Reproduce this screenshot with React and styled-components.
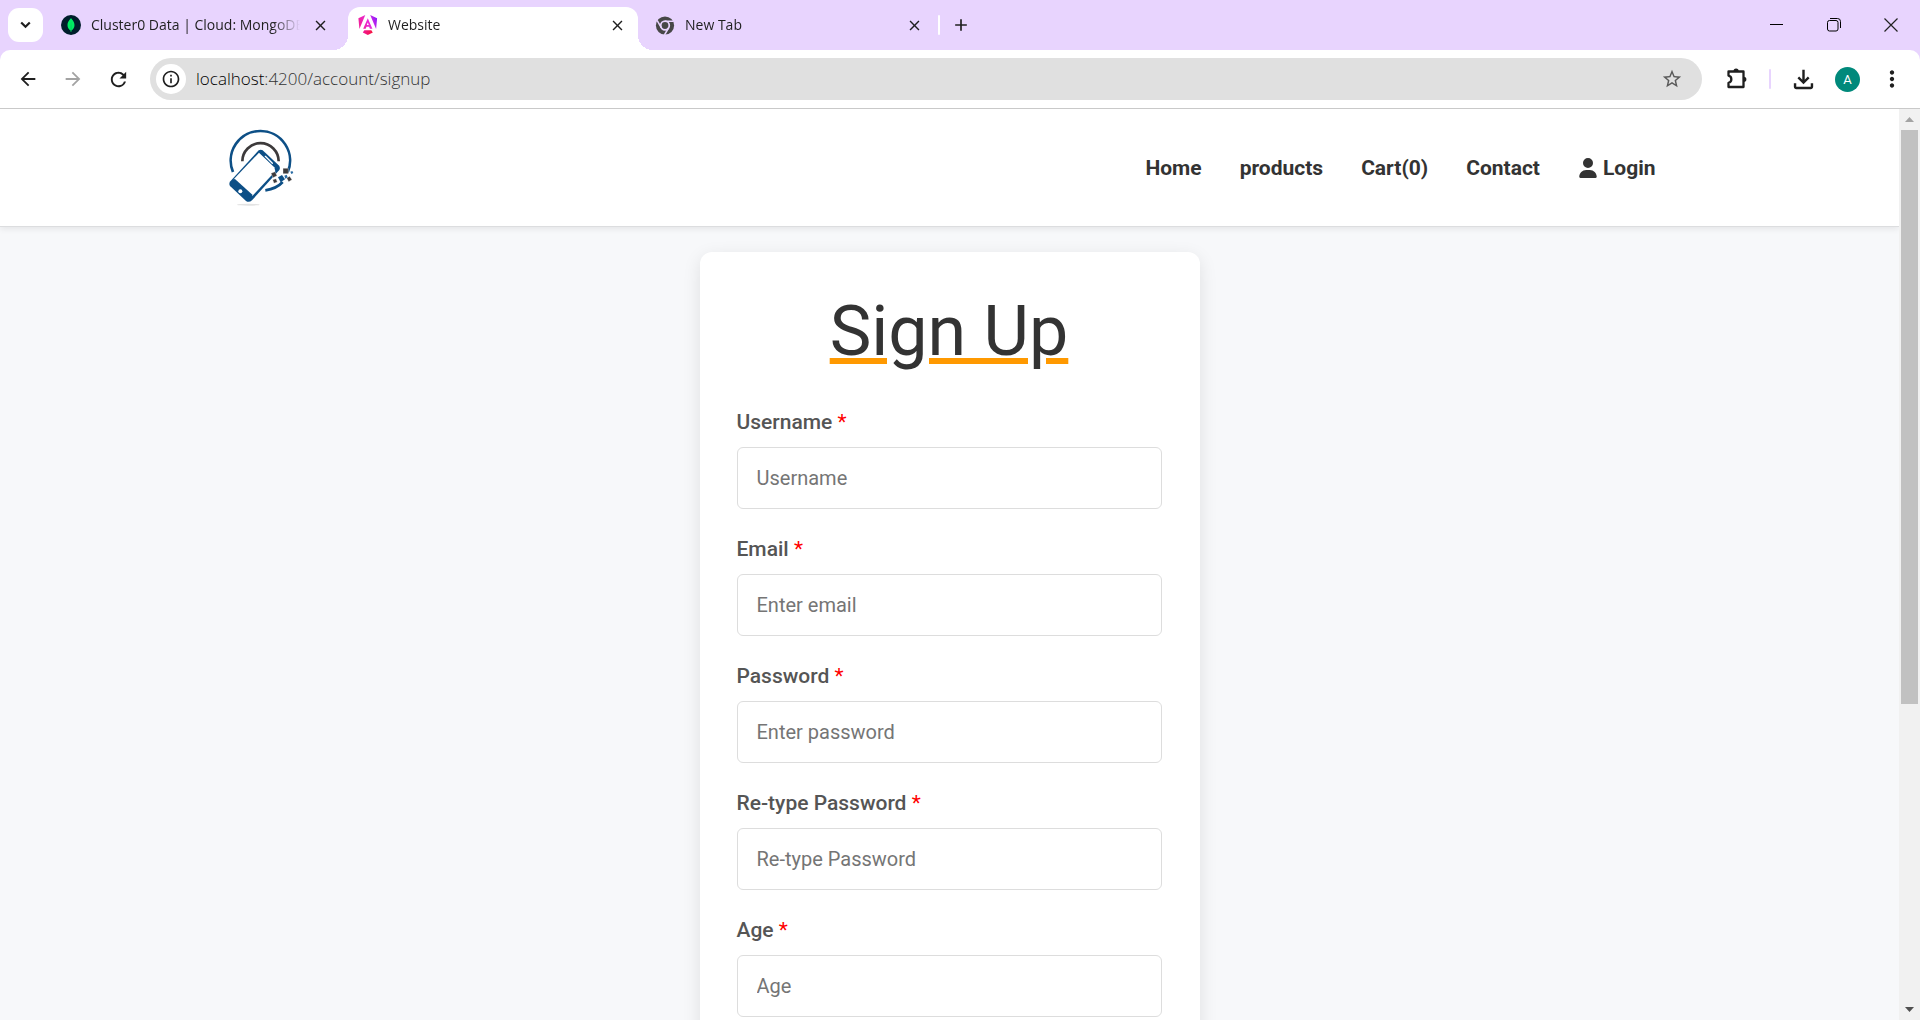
import React from "react";
import styled, { createGlobalStyle, css } from "styled-components";
import {
  MdArrowBack,
  MdArrowForward,
  MdRefresh,
  MdInfoOutline,
  MdStarBorder,
  MdOutlineFileDownload,
  MdMoreVert,
  MdClose,
  MdAdd,
} from "react-icons/md";
import { FaUser } from "react-icons/fa6";

const lavender = "#e8d4fe";
const uiFont = '"Open Sans", "Noto Sans", sans-serif';
const pageFont = 'Roboto, "Liberation Sans", sans-serif';

const GlobalStyle = createGlobalStyle`
  *, *::before, *::after { box-sizing: border-box; }
  body { margin: 0; font-family: ${pageFont}; }
  button { border: 0; padding: 0; background: none; font: inherit; color: inherit; }
  svg { display: block; flex: none; }
`;

const Window = styled.div`
  display: flex;
  flex-direction: column;
  height: 100vh;
  overflow: hidden;
  background: ${lavender};
`;

/* ---------- tab strip ---------- */

const TabStrip = styled.div`
  display: flex;
  height: 50px;
  flex: none;
  padding: 0 1px 0 8px;
  font-family: ${uiFont};
  color: #1f1f1f;
`;

const TabSearch = styled.button`
  display: flex;
  align-items: center;
  justify-content: center;
  width: 35px;
  height: 34px;
  margin: 8px 8px 0 0;
  border-radius: 11px;
  background: #fff;
`;

const Tabs = styled.div`
  display: flex;
  gap: 7px;
`;

const Tab = styled.div`
  position: relative;
  display: flex;
  align-items: center;
  gap: 10px;
  width: 290px;
  margin-top: 7px;
  padding: 0 11px 7px 10px;
  ${(p) =>
    p.$active &&
    css`
      background: #fff;
      border-radius: 12px 12px 0 0;
      &::before,
      &::after {
        content: "";
        position: absolute;
        bottom: 0;
        width: 15px;
        height: 15px;
      }
      &::before {
        right: 100%;
        background: radial-gradient(circle at 0 0, transparent 15px, #fff 15px);
      }
      &::after {
        left: 100%;
        background: radial-gradient(circle at 100% 0, transparent 15px, #fff 15px);
      }
    `}
`;

const TabTitle = styled.span`
  flex: 1;
  min-width: 0;
  overflow: hidden;
  white-space: nowrap;
  font-size: 14px;
  line-height: 22px;
  mask-image: linear-gradient(to right, #000 calc(100% - 28px), transparent);
`;

const TabClose = styled.button`
  display: flex;
  align-items: center;
  justify-content: center;
  width: 20px;
  height: 20px;
`;

const Divider = styled.span`
  width: 2px;
  height: 20px;
  flex: none;
  border-radius: 1px;
  background: ${(p) => p.$color};
`;

const NewTab = styled.div`
  display: flex;
  align-items: center;
  gap: 11px;
  padding: 0 0 0 3px;
`;

const WindowControls = styled.div`
  display: flex;
  margin-left: auto;
`;

const WindowButton = styled.button`
  display: flex;
  align-items: center;
  justify-content: center;
  width: 57px;
`;

/* ---------- toolbar ---------- */

const Toolbar = styled.div`
  display: flex;
  align-items: center;
  gap: 14px;
  height: 59px;
  flex: none;
  padding: 0 10px;
  background: #fff;
  border-bottom: 1px solid #c9c9c9;
  border-radius: 10px 10px 0 0;
  color: #1f1f1f;
  font-family: ${uiFont};
`;

const NavButtons = styled.div`
  display: flex;
  gap: 9px;
`;

const ToolButton = styled.button`
  display: flex;
  align-items: center;
  justify-content: center;
  width: 36px;
  height: 36px;

  &:disabled {
    color: #a3a3a3;
  }
`;

const Omnibox = styled.div`
  display: flex;
  align-items: center;
  flex: 1;
  height: 42px;
  margin-right: 3px;
  padding: 0 12px 0 6px;
  border-radius: 21px;
  background: #e0e0e0;
`;

const SiteInfo = styled.button`
  display: flex;
  align-items: center;
  justify-content: center;
  width: 30px;
  height: 30px;
  margin-right: 10px;
  border-radius: 50%;
  background: #fff;
`;

const Url = styled.div`
  flex: 1;
  font-size: 17px;
  font-weight: 300;
  line-height: 24px;
  color: #333;
`;

const Host = styled.span`
  color: #000;
`;

const Avatar = styled.button`
  width: 25px;
  height: 25px;
  border-radius: 50%;
  background: #00897b;
  color: #fff;
  font-family: ${pageFont};
  font-size: 13px;
  line-height: 25px;
`;

/* ---------- page ---------- */

const Viewport = styled.div`
  display: flex;
  flex: 1;
  min-height: 0;
`;

const Page = styled.div`
  flex: 1;
  overflow-y: auto;
  scrollbar-width: none;
  background: #f7f8fa;
`;

const SiteHeader = styled.header`
  position: relative;
  background: #fff;
  border-bottom: 1px solid #dcdddf;
  box-shadow: 0 2px 6px rgba(0, 0, 0, 0.08);
`;

const HeaderInner = styled.div`
  display: flex;
  align-items: center;
  justify-content: space-between;
  max-width: 1446px;
  height: 117px;
  margin: 0 auto;
`;

const SiteNav = styled.nav`
  display: flex;
  gap: 4px;
`;

const NavLink = styled.a`
  display: flex;
  align-items: center;
  gap: 5px;
  padding: 0 17px;
  font-size: 21px;
  line-height: 30px;
  font-weight: 700;
  color: #333;
  text-decoration: none;
`;

const Card = styled.form`
  width: 500px;
  max-width: 100%;
  margin: 25px auto;
  padding: 37px 38px 360px 37px;
  border-radius: 12px;
  background: #fff;
  box-shadow: 0 5px 18px rgba(0, 0, 0, 0.1);
`;

const Title = styled.h1`
  margin: 0 0 34px;
  font-size: 70px;
  line-height: 84px;
  font-weight: 400;
  text-align: center;
  color: #333;
  text-decoration: underline;
  text-decoration-color: #ff9900;
  text-decoration-thickness: 6px;
  text-underline-offset: 3px;
`;

const Field = styled.div`
  margin-bottom: 25px;
`;

const Label = styled.label`
  display: block;
  margin-bottom: 10px;
  font-size: 21px;
  line-height: 30px;
  font-weight: 500;
  color: #555;
`;

const Required = styled.span`
  font-weight: 400;
  color: #f00;
`;

const Input = styled.input`
  display: block;
  width: 100%;
  height: 62px;
  padding: 0 19px;
  border: 1px solid #ddd;
  border-radius: 6px;
  outline: none;
  font-family: ${pageFont};
  font-size: 20px;
  color: #333;

  &::placeholder {
    color: #757575;
    opacity: 1;
  }
`;

/* ---------- scrollbar ---------- */

const Scrollbar = styled.div`
  display: flex;
  flex-direction: column;
  align-items: center;
  width: 21px;
  background: #f1f1f1;
`;

const ScrollArrow = styled.button`
  display: flex;
  align-items: center;
  justify-content: center;
  width: 21px;
  height: 21px;
  color: ${(p) => (p.$dim ? "#a3a3a3" : "#505050")};
`;

const ScrollTrack = styled.div`
  flex: 1;
`;

const ScrollThumb = styled.div`
  width: 17px;
  height: 66%;
  background: #c1c1c1;
`;

/* ---------- drawings ---------- */

const ChevronIcon = () => (
  <svg width="11" height="8" viewBox="0 0 11 8">
    <path d="M1.200 1.500L5.500 5.800 9.800 1.500" fill="none" stroke="currentColor" strokeWidth="2.200" />
  </svg>
);

const MongoIcon = () => (
  <svg width="20" height="20" viewBox="0 0 20 20">
    <circle cx="10" cy="10" r="10" fill="#001e2b" />
    <path d="M10 3c.5 1.100 3.500 3.300 3.500 7.200 0 2.700-1.600 4.300-3.100 5.300L10.200 17h-.5l-.1-1.500C8 14.500 6.500 12.900 6.500 10.200 6.500 6.300 9.500 4.100 10 3z" fill="#00ed64" />
    <path d="M10 5.500l.3 11.300h-.5z" fill="#00924a" />
  </svg>
);

const AngularIcon = () => (
  <svg width="20" height="20" viewBox="0 0 20 20">
    <defs>
      <linearGradient id="ng" x1="0" y1="0.300" x2="1" y2="0">
        <stop offset="0" stopColor="#f0219e" />
        <stop offset="0.500" stopColor="#e62be0" />
        <stop offset="1" stopColor="#7a17ff" />
      </linearGradient>
      <linearGradient id="ngBase" x1="0" y1="0" x2="1" y2="0">
        <stop offset="0" stopColor="#f0169a" />
        <stop offset="1" stopColor="#f7143c" />
      </linearGradient>
    </defs>
    <path d="M7.300 0L.4 3.200l1 10.800L7.300 0zM12.200 0l6.900 3.200-1 10.800L12.200 0zM9.800 3.300L5.200 13.800h2.500l.8-2h2.600l.8 2h2.500L9.800 3.300zm0 4.300l1 2.400h-2z" fill="url(#ng)" />
    <path d="M6.300 15.200h7l1.500 2.300-5 2.500-5-2.500z" fill="url(#ngBase)" />
  </svg>
);

const ChromeIcon = () => (
  <svg width="20" height="19" viewBox="0 0 24 24">
    <circle cx="12" cy="12" r="11.500" fill="#474747" />
    <circle cx="12" cy="12" r="5.400" fill="none" stroke={lavender} strokeWidth="2.200" />
    <path d="M12 6.600H23M7.300 14.700L2 5.500M16.700 14.700L11.300 24" stroke={lavender} strokeWidth="2" fill="none" />
  </svg>
);

const PuzzleIcon = () => (
  <svg width="24" height="24" viewBox="0 0 24 24">
    <path d="M3.500 4.500h15v15.500h-15v-4.200a3.700 3.700 0 0 0 0-7.200z" fill="none" stroke="currentColor" strokeWidth="2.300" strokeLinejoin="round" />
    <path d="M8.500 4.200a2.600 2.600 0 0 1 5.200 0zM18.800 9.700a2.600 2.600 0 0 1 0 5.200z" fill="currentColor" />
  </svg>
);

const SiteLogo = () => (
  <svg width="68" height="82" viewBox="80 50 204 246" role="img" aria-label="Store logo">
    <ellipse cx="144" cy="283" rx="34" ry="3" fill="#e3e3e3" />
    <path d="M98 185A89 89 0 1 1 262 186M247 215Q229 235 195 240" fill="none" stroke="#0d4f86" strokeWidth="8" />
    <path d="M126 153A54 54 0 0 1 235 153" fill="none" stroke="#3d3a3b" strokeWidth="8" />
    <path d="M175 120q6-4 12 0l48 45q6 6 2 14l-82 91q-9 8-18 2l-47-44q-6-7 0-15z" fill="#0d4f86" />
    <path d="M176 127L222 171 225 183 156 257 100 207z" fill="#fff" />
    <path d="M176 124L225 172 230 182 234 170 186 124z" fill="#0d4f86" />
    <path d="M98 211L103 205 157 254 151 261z" fill="#0d4f86" />
    <path d="M195 138L216 159" stroke="#fff" strokeWidth="4" strokeLinecap="round" />
    <circle cx="120" cy="243" r="6" fill="#fff" />
    <g fill="#3d3a3b" stroke="#fff" strokeWidth="1">
      <path d="M248 174h16v16h-16zM212 189l12-5 6 12-12 6zM217 208l10-3 4 10-10 4zM259 203l9-5 7 10-10 6z" />
    </g>
    <path d="M233 201l12-7 9 13-13 9z" fill="#0d4f86" />
    <path d="M252 196l7-3 3 8-7 4zM270 184l6-2 3 6-6 3z" fill="#2a6ca4" />
  </svg>
);

const MinimizeIcon = () => (
  <svg width="14" height="14" viewBox="0 0 14 14">
    <path d="M0 6.500h13" stroke="#000" />
  </svg>
);

const RestoreIcon = () => (
  <svg width="14" height="14" viewBox="0 0 14 14" fill="none" stroke="#000">
    <rect x="0.500" y="2.500" width="10.500" height="10.500" rx="2" />
    <path d="M3 .5h7.500a3 3 0 0 1 3 3V10" />
  </svg>
);

const CloseWindowIcon = () => (
  <svg width="14" height="14" viewBox="0 0 14 14">
    <path d="M.5.5l13 13M13.500.5l-13 13" stroke="#222" strokeWidth="1.200" />
  </svg>
);

const Triangle = ({ down }) => (
  <svg width="9" height="5" viewBox="0 0 9 5">
    <path d={down ? "M0 0h9L4.500 5z" : "M0 5h9L4.500 0z"} fill="currentColor" />
  </svg>
);

/* ---------- data ---------- */

const tabs = [
  { title: "Cluster0 Data | Cloud: MongoDB", icon: <MongoIcon /> },
  { title: "Website", icon: <AngularIcon />, active: true },
  { title: "New Tab", icon: <ChromeIcon /> },
];

const links = ["Home", "products", "Cart(0)", "Contact"];

const fields = [
  { id: "username", label: "Username", placeholder: "Username", type: "text" },
  { id: "email", label: "Email", placeholder: "Enter email", type: "email" },
  { id: "password", label: "Password", placeholder: "Enter password", type: "password" },
  { id: "repassword", label: "Re-type Password", placeholder: "Re-type Password", type: "password" },
  { id: "age", label: "Age", placeholder: "Age", type: "text" },
];

export default function App() {
  return (
    <Window>
      <GlobalStyle />
      <TabStrip>
        <TabSearch aria-label="Search tabs">
          <ChevronIcon />
        </TabSearch>
        <Tabs>
          {tabs.map((t) => (
            <Tab key={t.title} $active={t.active}>
              {t.icon}
              <TabTitle>{t.title}</TabTitle>
              <TabClose aria-label="Close tab">
                <MdClose size={17} />
              </TabClose>
            </Tab>
          ))}
        </Tabs>
        <NewTab>
          <Divider $color="#fff" />
          <TabClose aria-label="New tab">
            <MdAdd size={20} />
          </TabClose>
        </NewTab>
        <WindowControls>
          <WindowButton aria-label="Minimize"><MinimizeIcon /></WindowButton>
          <WindowButton aria-label="Restore"><RestoreIcon /></WindowButton>
          <WindowButton aria-label="Close"><CloseWindowIcon /></WindowButton>
        </WindowControls>
      </TabStrip>

      <Toolbar>
        <NavButtons>
          <ToolButton aria-label="Back"><MdArrowBack size={22} /></ToolButton>
          <ToolButton aria-label="Forward" disabled><MdArrowForward size={22} /></ToolButton>
          <ToolButton aria-label="Reload"><MdRefresh size={23} /></ToolButton>
        </NavButtons>
        <Omnibox>
          <SiteInfo aria-label="Site information"><MdInfoOutline size={20} /></SiteInfo>
          <Url><Host>localhost</Host>:4200/account/signup</Url>
          <ToolButton aria-label="Bookmark"><MdStarBorder size={22} color="#5a5a5a" /></ToolButton>
        </Omnibox>
        <ToolButton aria-label="Extensions"><PuzzleIcon /></ToolButton>
        <Divider $color={lavender} />
        <ToolButton aria-label="Downloads"><MdOutlineFileDownload size={29} /></ToolButton>
        <Avatar aria-label="Profile">A</Avatar>
        <ToolButton aria-label="Menu"><MdMoreVert size={26} /></ToolButton>
      </Toolbar>

      <Viewport>
        <Page>
          <SiteHeader>
            <HeaderInner>
              <SiteLogo />
              <SiteNav>
                {links.map((l) => (
                  <NavLink key={l} href="#">{l}</NavLink>
                ))}
                <NavLink href="#">
                  <FaUser size={20} />
                  Login
                </NavLink>
              </SiteNav>
            </HeaderInner>
          </SiteHeader>
          <Card>
            <Title>Sign Up</Title>
            {fields.map((f) => (
              <Field key={f.id}>
                <Label htmlFor={f.id}>
                  {f.label} <Required>*</Required>
                </Label>
                <Input id={f.id} type={f.type} placeholder={f.placeholder} />
              </Field>
            ))}
          </Card>
        </Page>
        <Scrollbar>
          <ScrollArrow $dim aria-label="Scroll up"><Triangle /></ScrollArrow>
          <ScrollTrack>
            <ScrollThumb />
          </ScrollTrack>
          <ScrollArrow aria-label="Scroll down"><Triangle down /></ScrollArrow>
        </Scrollbar>
      </Viewport>
    </Window>
  );
}
